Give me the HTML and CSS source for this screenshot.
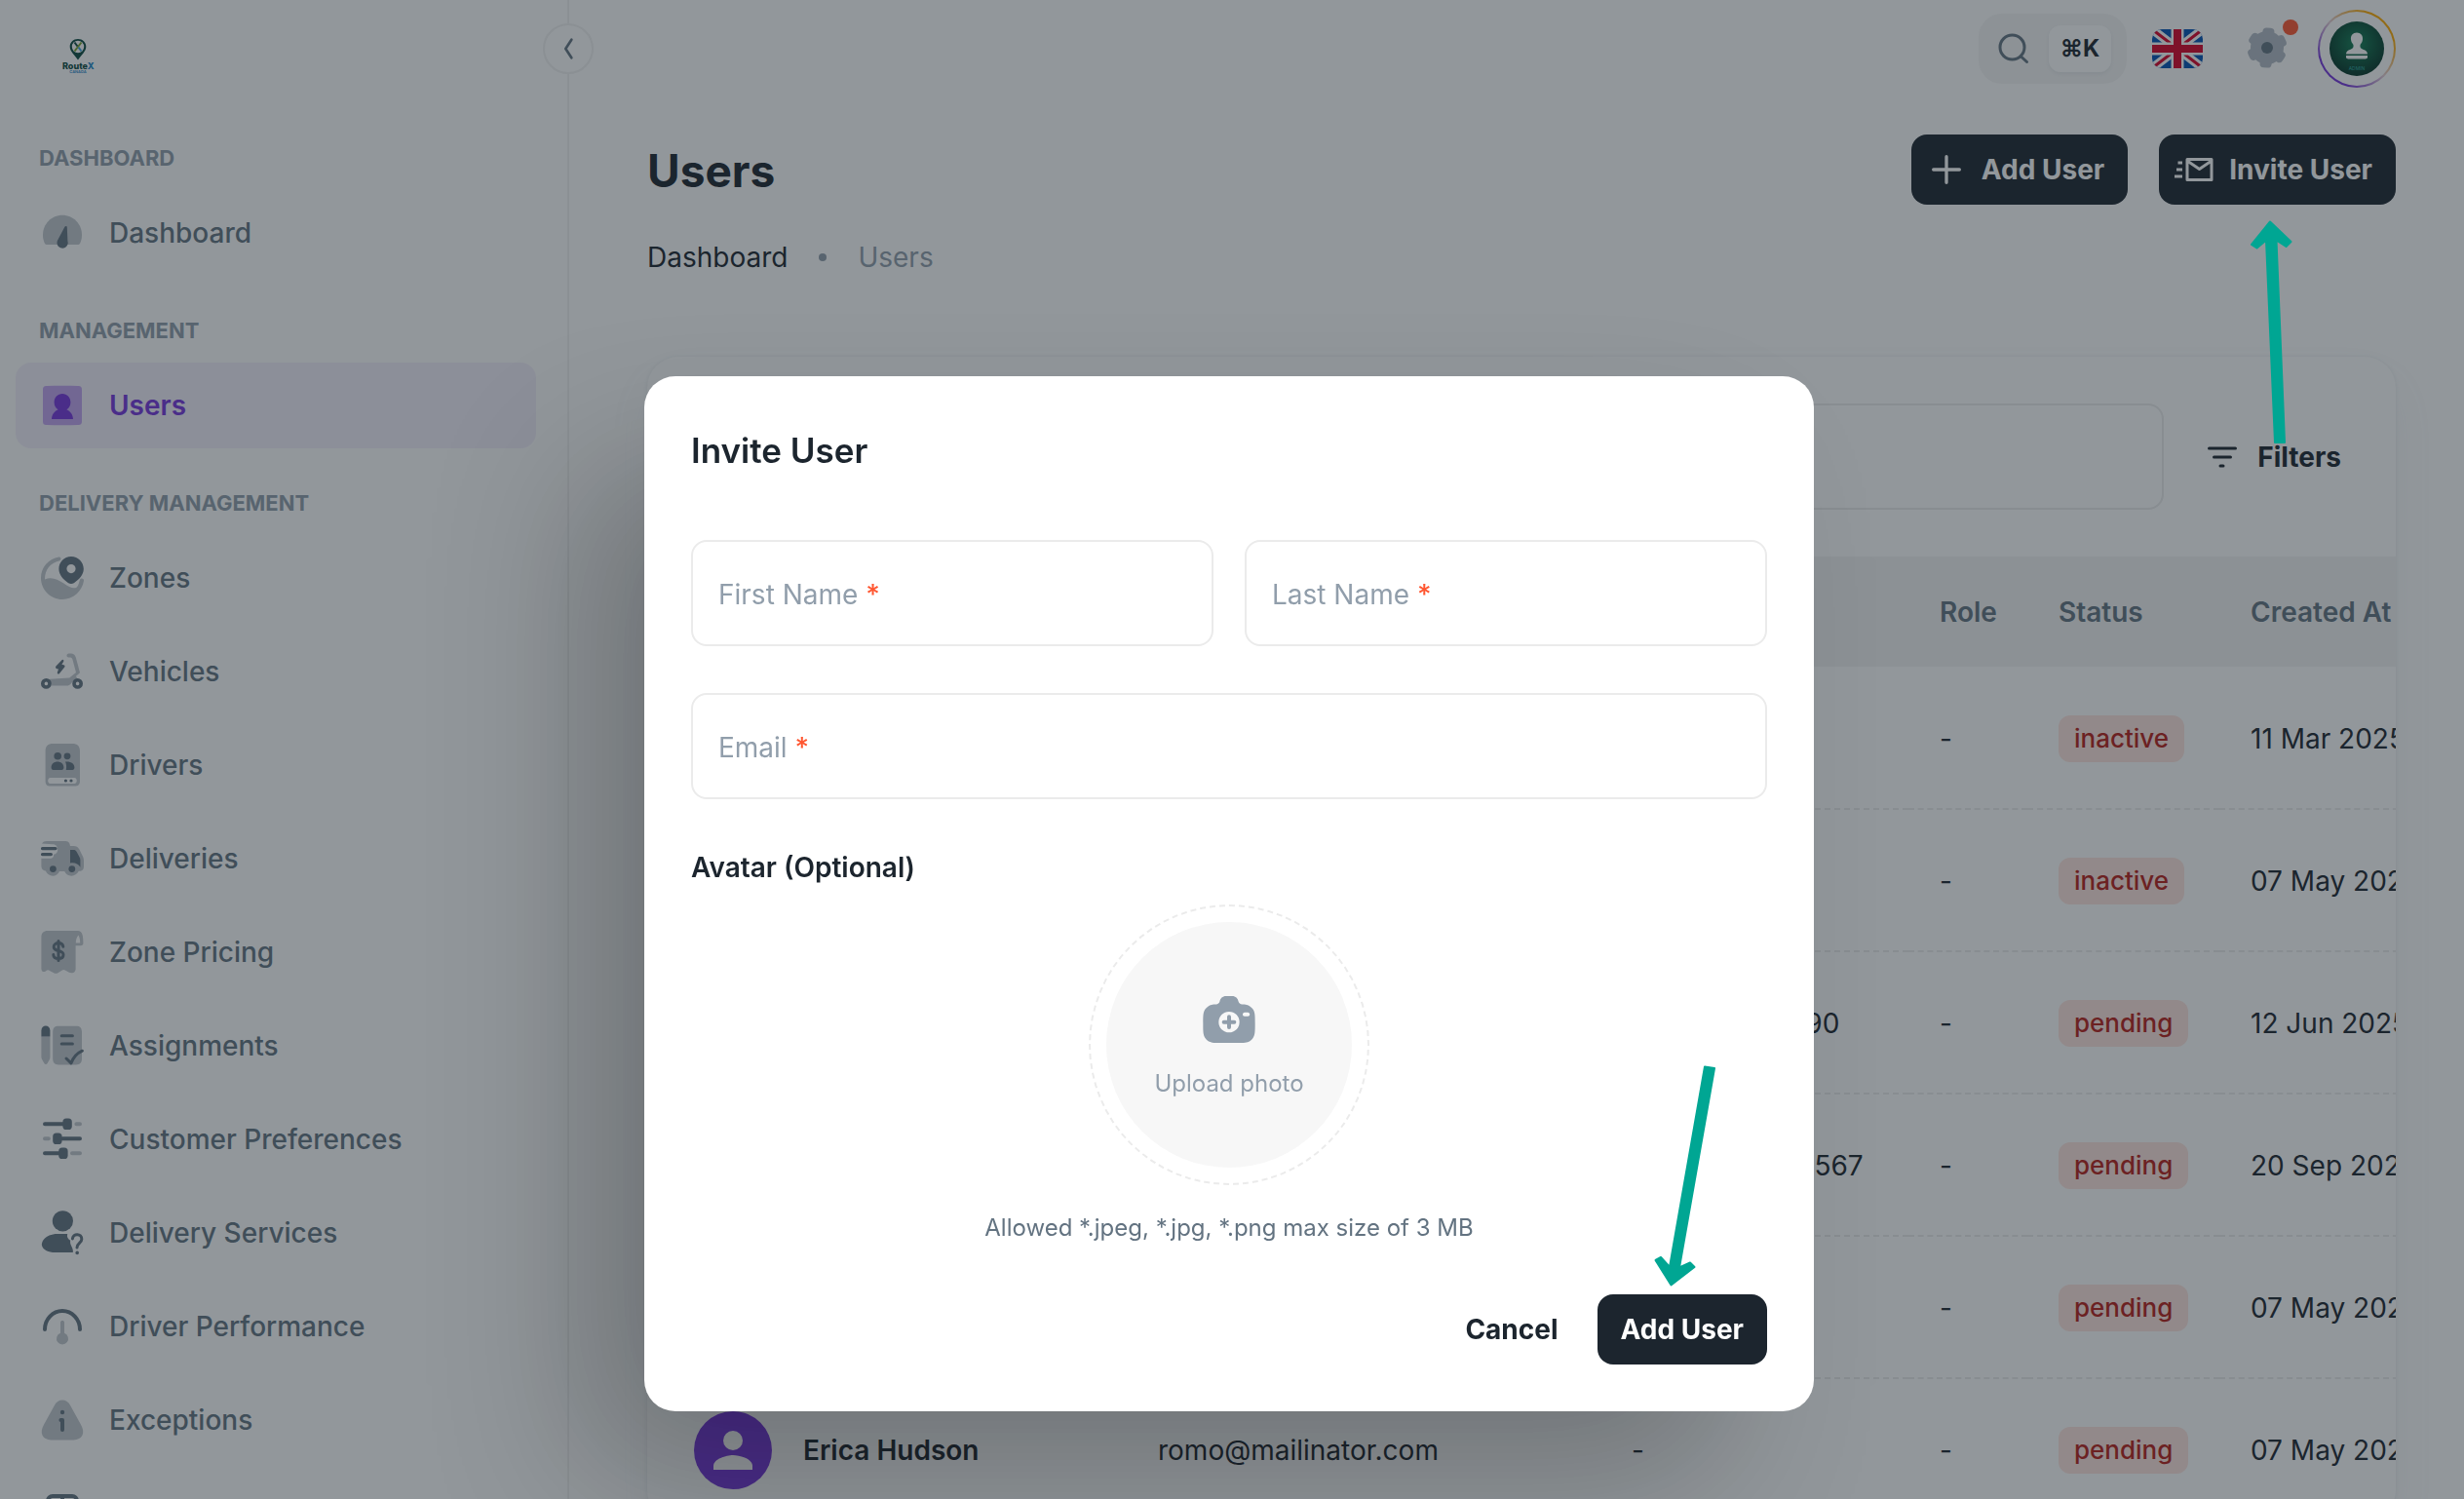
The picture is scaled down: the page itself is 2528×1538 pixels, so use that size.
FILE: index.html
```html
<!DOCTYPE html>
<html lang="en">
<head>
    <meta charset="UTF-8">
    <meta name="viewport" content="width=device-width, initial-scale=1.0">
    <title>Users</title>
    <link rel="stylesheet" href="styles.css">
</head>
<body>
    <div class="layout">
        <aside class="sidebar">
            <a class="logo" href="#" aria-label="RouteX">
                <svg viewBox="0 0 40 40" width="40" height="40">
                    <path d="M20 4c-4.700 0-8.300 3.500-8.300 8 0 5 5 8.300 8.300 13.500 3.300-5.200 8.300-8.500 8.300-13.500 0-4.500-3.600-8-8.300-8z" fill="#0b4a40"/>
                    <circle cx="20" cy="12" r="6.200" fill="#fff"/>
                    <path d="M16.500 16.500l7-9" stroke="#7aa32c" stroke-width="2"/>
                    <path d="M16.500 7.500l3 4" stroke="#0b4a40" stroke-width="2"/>
                    <path d="M20.500 12.500l3 4" stroke="#3aa0dc" stroke-width="2"/>
                    <text x="4" y="35" class="logo-name">Route<tspan fill="#1d86c8">X</tspan></text>
                    <text x="20" y="39" text-anchor="middle" class="logo-sub">CANADA</text>
                </svg>
            </a>
            <button class="toggle" aria-label="Collapse menu">
                <svg viewBox="0 0 24 24" width="32" height="32" fill="none" stroke="#637381" stroke-width="2" stroke-linecap="round" stroke-linejoin="round"><path d="M14.500 5l-4.500 7 4.500 7"/></svg>
            </button>

            <nav>
                <h6>DASHBOARD</h6>
                <ul>
                    <li><a href="#">
                        <svg viewBox="0 0 24 24"><path class="lt" d="M22 13c0 1.900-.4 3.200-.9 4.200-.3.500-.8.800-1.400.8H4.300c-.6 0-1.100-.3-1.400-.8C2.400 16.200 2 14.900 2 13 2 7.400 6.500 2.900 12 2.900S22 7.400 22 13z"/><path d="M14.400 9.200c.1-.8-.8-1-1.200-.3L9.700 15.500a2.800 2.800 0 1 0 5 .6z"/></svg>
                        Dashboard</a></li>
                </ul>

                <h6>MANAGEMENT</h6>
                <ul>
                    <li><a href="#" class="active">
                        <svg viewBox="0 0 24 24"><path class="lt" d="M2 4c0-1.500.5-2 2-2 5-.2 11-.2 16 0 1.500 0 2 .5 2 2v16c0 1.500-.5 2-2 2-5 .2-11 .2-16 0-1.500 0-2-.5-2-2z"/><path d="M12 6c-2.400 0-4.200 1.900-4.200 4.400 0 1.700.8 3 2 3.700-1.900.9-3.200 2.500-3.300 4.900h11c-.1-2.400-1.400-4-3.300-4.900 1.200-.7 2-2 2-3.700C16.200 7.900 14.400 6 12 6z"/></svg>
                        Users</a></li>
                </ul>

                <h6>DELIVERY MANAGEMENT</h6>
                <ul>
                    <li><a href="#">
                        <svg viewBox="0 0 24 24"><path class="lt" d="M10.200 1.300C5 2.100 1 6.600 1 12c0 6.100 4.900 11 11 11 5.500 0 10.200-4.200 11-9.600.1-1.200-1.500-1.600-2-.5-.4 1-.6 2.900-1.600 3.800-1.700 1.200-4-.2-6.700-2C9.400 12.600 6.500 11.200 3 12.700 3 7.800 5.800 4.400 10.300 3.300c1.400-.4 1.100-2.200-.1-2z"/><path fill-rule="evenodd" d="M16.500 1c-3.600 0-6.300 2.900-6.300 6.400 0 2.900 2.300 5.600 4.900 7.200.9.500 1.900.5 2.800 0 2.600-1.600 5-4.300 5-7.200C22.900 3.900 20.100 1 16.500 1zm0 4a2.300 2.300 0 1 1 0 4.600 2.300 2.300 0 0 1 0-4.600z"/></svg>
                        Zones</a></li>
                    <li><a href="#">
                        <svg viewBox="0 0 24 24"><path class="lt" d="M15.300 2.800c-1.400 0-1.400 2 0 2h.8c.6 0 .9.500 1.100 1l1.800 6.700-3.400 2.700-12 .8c1.900.2 2.700 1.600 2.800 3.200h8.400c2-.1 2.200-3.200 5-3.200l-.8-1.600 2-1.800L18.900 4.700c-.4-1.200-1.300-1.900-2.500-1.900z"/><path fill-rule="evenodd" d="M3.700 15.500a2.700 2.700 0 1 1 0 5.400 2.700 2.700 0 0 1 0-5.400zm0 1.800a.9.900 0 1 0 0 1.800.9.900 0 0 0 0-1.800zM19.800 15.500a2.700 2.700 0 1 1 0 5.400 2.700 2.700 0 0 1 0-5.400zm0 1.800a.9.900 0 1 0 0 1.800.9.900 0 0 0 0-1.800zM11.600 6.200L8.700 9.300c-.4.600-.1 1.200.5 1.300l.8.200-.6 1.700c-.1.700.6 1 1.100.5l2.600-3.200c.4-.6.100-1.100-.5-1.200l-.9-.2.900-1.500c.4-.9-.5-1.400-1-.7z"/></svg>
                        Vehicles</a></li>
                    <li><a href="#">
                        <svg viewBox="0 0 24 24"><path class="lt" fill-rule="evenodd" d="M3.300 5c0-2.800 1.200-4 4-4H17c2.800 0 4 1.200 4 4v15c0 2-.8 2.800-2.800 2.800H6c-2 0-2.700-.8-2.700-2.800zM5.800 18.500c-1.600 0-1.600 3 0 3h12.400c1.600 0 1.600-3 0-3z"/><circle cx="9.600" cy="7.400" r="1.900"/><circle cx="14.500" cy="7.400" r="1.700"/><path d="M6.300 13.300c0-4 6.400-4 6.400 0 0 .7-.4 1.200-1 1.200H7.300c-.6 0-1-.5-1-1.200zM13.500 10.300c2.700-.3 4.700.8 4.700 3 0 .7-.4 1.200-1 1.200h-3.300c.3-1.600.2-2.900-.4-4.200z"/><circle cx="13.700" cy="20" r=".8"/><circle cx="16.500" cy="20" r=".8"/></svg>
                        Drivers</a></li>
                    <li><a href="#">
                        <svg viewBox="0 0 24 24"><path class="lt" d="M1.500 4.300C2 3.400 2.800 3 4 3h9c2 0 2.700.6 3 2.500h1.700c1.500 0 2.300.5 3 1.800l1.600 3.200c.5.900.7 1.700.7 2.800v2.200c0 2.200-.6 2.900-2.600 2.900-1.500 3.200-6 3.200-7.300.1h-2.600c-1.400 3.200-5.700 3.100-7.100-.2-1.800-.3-2.200-1.300-2.200-3v-3.400h4.300c1.700 0 2.200-.9 2-2 1.200-.2 2.100-1.100 2.100-2.400 0-1.700-.9-2.900-2.500-2.900z"/><path d="M1.800 6h6.600c1.200 0 1.200 1.600 0 1.600H1.800c-1.100 0-1.100-1.600 0-1.600zM1.800 9h4.300c1.200 0 1.200 1.600 0 1.600H1.800C.7 10.600.7 9 1.800 9zM16 7.500h1.600c.9 0 1.400.3 1.800 1.100l1.400 2.700c.3.500.4 1 .4 1.600v3.500c-1-1.800-2.800-2.600-5.200-2.200z"/><circle cx="7.200" cy="17.300" r="1.700"/><circle cx="16.900" cy="17.300" r="1.700"/></svg>
                        Deliveries</a></li>
                    <li><a href="#">
                        <svg viewBox="0 0 24 24"><path class="lt" fill-rule="evenodd" d="M20 1H4.500C2.300 1 1.200 2.100 1.200 4.300v16.200c0 1.400 1.200 2 2.200 1.200.8-.7 1.500-.7 2.300-.1l1.900 1c.8.500 1.500.4 2.300-.1l1.800-1.100c.7-.5 1.300-.4 2 0l1.800 1c1.500.5 3.300.3 3.300-2V8.600h2.600c.9 0 1.300-.4 1.300-1.300C22.700 3.500 22.200 1 20 1zm.2 2.200c.6 1 .9 2.300.9 4h-2.200c0-1.600.4-2.900 1.300-4z"/><path d="M12.400 9.100c-.2-1.200-1.100-1.800-2.400-1.800s-2.400.7-2.400 1.900c0 2.900 4.900 1.200 4.900 4.100 0 1.300-1.100 2-2.500 2s-2.500-.7-2.600-2M10 6.200v10" class="st"/></svg>
                        Zone Pricing</a></li>
                    <li><a href="#">
                        <svg viewBox="0 0 24 24"><path class="lt" d="M1.200 7.200h4.500v10.600c0 .6-.1 1-.4 1.500l-1 1.700c-.4.700-1.200.7-1.600 0l-1-1.700c-.3-.5-.5-.9-.5-1.500zM7.100 5c0-2.200.9-3.100 3.100-3.100h8.700C21.100 1.900 22 2.800 22 5v13.500c0 2.200-.9 3.200-3.100 3.200h-8.700c-2.200 0-3.100-1-3.100-3.200z"/><path d="M1.200 4.200c0-3.200 4.500-3.200 4.500 0v3H1.200z"/><path class="st" d="M11.600 6.900h5.600M11.600 11h5.600M14 18.500l2.500 2.400c1-2.800 3.300-5.200 5.700-6.300"/></svg>
                        Assignments</a></li>
                    <li><a href="#">
                        <svg viewBox="0 0 24 24"><path class="st thick" d="M3 4.100h10M12 11.600h9M3 19.100h8"/><path class="st thick lt" d="M19.200 4.100h1.800M3 11.600h1.900M17 19.100h4"/><rect x="12.200" y="1.200" width="4.700" height="5.800" rx="1.800"/><rect x="7.100" y="8.700" width="4.700" height="5.800" rx="1.800"/><rect x="10.100" y="16.200" width="4.700" height="5.800" rx="1.800"/></svg>
                        Customer Preferences</a></li>
                    <li><a href="#">
                        <svg viewBox="0 0 24 24"><circle cx="12.200" cy="5.900" r="5.300"/><path d="M1.400 18c.3-3.500 4-5.500 8-5.500h5.200c-.4 1.500.2 2.700 1.500 3.400-.5 2.400 1.700 3.500 1.300 6.100H7c-3.300-.4-5.300-1.800-5.600-4z"/><path class="st" d="M17.200 15c.2-3 4.800-2.800 4.700.2 0 2-2.400 2-2.400 4.300"/><circle cx="19.600" cy="22.200" r=".9"/></svg>
                        Delivery Services</a></li>
                    <li><a href="#">
                        <svg viewBox="0 0 24 24"><path class="st thick" d="M3 13.500a9 9.500 0 0 1 18 0"/><path class="lt" d="M11 10c0-1.300 2-1.300 2 0v5.400a3 3 0 1 1-2 0z"/></svg>
                        Driver Performance</a></li>
                    <li><a href="#">
                        <svg viewBox="0 0 24 24"><path class="lt" d="M7.800 4.700c1.800-3.900 6.600-3.900 8.400 0l5.300 9.700c2.500 4.300.6 7.800-3.700 7.800H6.200c-4.300 0-6.200-3.500-3.700-7.800z"/><circle cx="12" cy="8" r="1.100"/><path class="st thick" d="M11.200 12h.8v5"/></svg>
                        Exceptions</a></li>
                    <li><a href="#" aria-label="Reports">
                        <svg viewBox="0 0 24 24"><path class="st thick" d="M7 3h10a2.500 2.500 0 0 1 2.500 2.500v13A2.500 2.500 0 0 1 17 21H7a2.500 2.500 0 0 1-2.500-2.500v-13A2.500 2.500 0 0 1 7 3zM12 3v6"/></svg>
                    </a></li>
                </ul>
            </nav>
        </aside>

        <main>
            <header class="topbar">
                <button class="search" aria-label="Search">
                    <svg viewBox="0 0 40 40" width="40" height="40" fill="none" stroke="#637381" stroke-width="3" stroke-linecap="round"><circle cx="18.500" cy="18.500" r="12.500"/><path d="M27.500 28l6 5.500"/></svg>
                    <kbd>⌘K</kbd>
                </button>
                <button class="flag" aria-label="Language">
                    <svg viewBox="0 0 52 40" width="52" height="40">
                        <rect width="52" height="40" fill="#0052b4"/>
                        <path d="M0 0l52 40M52 0L0 40" stroke="#fff" stroke-width="9"/>
                        <path d="M0 0l52 40M52 0L0 40" stroke="#d80027" stroke-width="3"/>
                        <path d="M26 0v40M0 20h52" stroke="#fff" stroke-width="13"/>
                        <path d="M26 0v40M0 20h52" stroke="#d80027" stroke-width="8"/>
                    </svg>
                </button>
                <button class="gear" aria-label="Settings">
                    <svg viewBox="0 0 48 48" width="48" height="48" fill="#b2bbc5">
                        <circle cx="24" cy="23" r="17"/>
                        <rect x="18" y="2.500" width="12" height="41" rx="4" transform="rotate(5 24 23)"/>
                        <rect x="18" y="2.500" width="12" height="41" rx="4" transform="rotate(65 24 23)"/>
                        <rect x="18" y="2.500" width="12" height="41" rx="4" transform="rotate(125 24 23)"/>
                        <circle cx="24" cy="23" r="6" fill="#637381"/>
                    </svg>
                    <span class="dot"></span>
                </button>
                <button class="account" aria-label="Account">
                    <svg viewBox="0 0 56 56" width="56" height="56">
                        <defs><radialGradient id="av" cx=".5" cy=".4" r=".6"><stop offset="0" stop-color="#128056"/><stop offset="1" stop-color="#053528"/></radialGradient></defs>
                        <circle cx="28" cy="28" r="28" fill="url(#av)"/>
                        <path d="M28 11.500c-4 0-6.500 3-6 7 .2 2.500 1.500 4 2.500 5.500.5 3-1 4-3 4.700-3 .8-4.300 2.300-4.500 4.800h22c-.2-2.500-1.500-4-4.500-4.800-2-.7-3.500-1.700-3-4.700 1-1.500 2.300-3 2.500-5.500.5-4-2-7-6-7zM17 35h22v2.500l-2 1H19l-2-1z" fill="#fff"/>
                        <text x="28" y="50" text-anchor="middle" class="avatar-text">ADMIN</text>
                    </svg>
                </button>
            </header>

            <div class="page-head">
                <div>
                    <h1>Users</h1>
                    <div class="breadcrumb">
                        <a href="#">Dashboard</a>
                        <span class="sep"></span>
                        <span>Users</span>
                    </div>
                </div>
                <div class="head-actions">
                    <button class="btn">
                        <svg viewBox="0 0 24 24" width="40" height="40" fill="none" stroke="currentColor" stroke-width="2" stroke-linecap="round"><path d="M12 4v16M4 12h16"/></svg>
                        Add User
                    </button>
                    <button class="btn">
                        <svg viewBox="0 0 40 40" width="40" height="40" fill="none" stroke="currentColor" stroke-width="3" stroke-linejoin="round"><path d="M13 9.500h25v21H13zM13 11l12.500 8.500L38 11"/><path d="M3.500 13h4.500M2 20h6M0 27h8"/></svg>
                        Invite User
                    </button>
                </div>
            </div>

            <section class="card">
                <div class="toolbar">
                    <input type="text" aria-label="Search users">
                    <button class="filters">
                        <svg viewBox="0 0 40 40" width="40" height="40" fill="none" stroke="currentColor" stroke-width="3" stroke-linecap="round"><path d="M6.500 11h27M11.500 20h17M18 29h3"/></svg>
                        Filters
                    </button>
                </div>
                <table>
                    <colgroup>
                        <col class="c-name"><col class="c-email"><col class="c-phone"><col class="c-role"><col class="c-status"><col class="c-date">
                    </colgroup>
                    <thead>
                        <tr><th></th><th></th><th></th><th>Role</th><th>Status</th><th>Created At</th></tr>
                    </thead>
                    <tbody>
                        <tr><td></td><td></td><td></td><td>-</td><td><span class="chip">inactive</span></td><td>11 Mar 2025</td></tr>
                        <tr><td></td><td></td><td></td><td>-</td><td><span class="chip">inactive</span></td><td>07 May 2025</td></tr>
                        <tr><td></td><td></td><td>+112345678990</td><td>-</td><td><span class="chip">pending</span></td><td>12 Jun 2025</td></tr>
                        <tr><td></td><td></td><td>+1 555501234567</td><td>-</td><td><span class="chip">pending</span></td><td>20 Sep 2025</td></tr>
                        <tr><td></td><td></td><td></td><td>-</td><td><span class="chip">pending</span></td><td>07 May 2025</td></tr>
                        <tr>
                            <td>
                                <div class="user">
                                    <svg viewBox="0 0 80 80" width="80" height="80"><circle cx="40" cy="40" r="40" fill="#7635dc"/><circle cx="40" cy="30" r="10" fill="#fff"/><path d="M20 60v-4c0-7 13-11 20-11s20 4 20 11v4z" fill="#fff"/></svg>
                                    Erica Hudson
                                </div>
                            </td>
                            <td>romo@mailinator.com</td><td>-</td><td>-</td><td><span class="chip">pending</span></td><td>07 May 2025</td>
                        </tr>
                    </tbody>
                </table>
            </section>
        </main>
    </div>

    <div class="overlay">
        <form class="modal" role="dialog" aria-labelledby="modal-title">
            <h2 id="modal-title">Invite User</h2>
            <div class="fields">
                <div class="field">
                    <input type="text" id="first">
                    <label for="first">First Name <i>*</i></label>
                </div>
                <div class="field">
                    <input type="text" id="last">
                    <label for="last">Last Name <i>*</i></label>
                </div>
                <div class="field wide">
                    <input type="email" id="email">
                    <label for="email">Email <i>*</i></label>
                </div>
            </div>
            <h3>Avatar (Optional)</h3>
            <button type="button" class="upload">
                <span class="upload-inner">
                    <svg viewBox="0 0 24 24" width="64" height="64" fill="#919eab"><path fill-rule="evenodd" d="M9.800 21h4.400c3.100 0 4.600 0 5.800-.7.500-.3.900-.7 1.200-1.200.8-1.100.8-2.600.8-5.500s0-4.400-.8-5.500c-.3-.5-.7-.9-1.200-1.200-.7-.5-1.600-.7-3-.7-.7 0-1.200-.5-1.400-1.100C15.400 3.900 14.500 3 13.200 3h-2.400c-1.300 0-2.200.9-2.400 2.100-.2.600-.7 1.100-1.400 1.100-1.400 0-2.300.2-3 .7-.5.300-.9.700-1.200 1.200C2 9.200 2 10.700 2 13.600s0 4.400.8 5.500c.3.500.7.900 1.200 1.200 1.200.7 2.700.7 5.800.7zM12 9a4 4 0 1 1 0 8 4 4 0 0 1 0-8zm6 .3h1.200c1 0 1 1.500 0 1.500H18c-1 0-1-1.500 0-1.500z"/><path d="M12 11v4M10 13h4" stroke="#919eab" stroke-width="1.500" stroke-linecap="round"/></svg>
                    Upload photo
                </span>
            </button>
            <p class="hint">Allowed *.jpeg, *.jpg, *.png max size of 3 MB</p>
            <div class="actions">
                <button type="button" class="btn text">Cancel</button>
                <button type="submit" class="btn">Add User</button>
            </div>
        </form>
    </div>

    <!-- pointers to the two buttons -->
    <svg class="arrow arrow-invite" viewBox="0 0 48 232" width="48" height="232"><path d="M23 1.500L4 25l5.500 3.500 9.500-8 9 207.500h10L29.500 20.500l10 6.500 5-5z"/></svg>
    <svg class="arrow arrow-add" viewBox="0 0 66 230" width="66" height="230"><path d="M18.500 226.500L2.500 201l5.500-3 9 10L53 2.500l10 1.500-36 204.500 11-5 4.500 4.500z"/></svg>
</body>
</html>
```
FILE: styles.css
```css
*{
    margin: 0;
    padding: 0;
    box-sizing: border-box;
}
body{
    font-family: Inter, "Liberation Sans", sans-serif;
    font-size: 28px;
    line-height: 44px;
    color: #1c252e;
    background: #fff;
    overflow: hidden;
}
a{
    color: inherit;
    text-decoration: none;
}
ul{
    list-style: none;
}
button{
    font: inherit;
    color: inherit;
    background: none;
    border: 0;
    cursor: pointer;
}
svg{
    display: block;
    flex: none;
}
.layout{
    display: flex;
    height: 100vh;
    overflow: hidden;
}

/* sidebar */
.sidebar{
    position: relative;
    flex: none;
    width: 584px;
    padding: 36px 32px 0 16px;
    border-right: 2px solid #f1f1f1;
}
.logo{
    display: block;
    width: 40px;
    margin: 0 0 38px 44px;
}
.logo-name{
    font-size: 9px;
    font-weight: 800;
    fill: #0b4a40;
}
.logo-sub{
    font-size: 4px;
    font-weight: 600;
    fill: #1d86c8;
}
.toggle{
    position: absolute;
    top: 24px;
    right: -27px;
    width: 52px;
    height: 52px;
    border: 2px solid #f1f1f1;
    border-radius: 50%;
    background: #fff;
    display: flex;
    align-items: center;
    justify-content: center;
}
nav h6{
    padding: 32px 24px 16px;
    font-size: 22px;
    line-height: 33px;
    font-weight: 700;
    color: #919eab;
}
nav ul{
    display: flex;
    flex-direction: column;
    gap: 8px;
    margin-bottom: 8px;
}
nav a{
    display: flex;
    align-items: center;
    gap: 24px;
    height: 88px;
    padding: 0 24px;
    border-radius: 16px;
    font-weight: 500;
    color: #637381;
}
nav a svg{
    width: 48px;
    height: 48px;
    fill: currentColor;
}
nav a.active{
    color: #7635dc;
    font-weight: 600;
    background: rgba(118,53,220,.08);
}
.lt{
    opacity: .4;
}
.st{
    fill: none;
    stroke: currentColor;
    stroke-width: 1.5;
    stroke-linecap: round;
    stroke-linejoin: round;
}
.thick{
    stroke-width: 2;
}

/* main */
main{
    flex: 1;
    min-width: 0;
    padding: 10px 70px 0 80px;
}
.topbar{
    display: flex;
    align-items: center;
    justify-content: flex-end;
    height: 80px;
}
.search{
    display: flex;
    align-items: center;
    gap: 16px;
    height: 72px;
    padding: 0 16px;
    border-radius: 24px;
    background: #f6f6f6;
}
.search kbd{
    width: 64px;
    height: 48px;
    line-height: 48px;
    border-radius: 12px;
    background: #fff;
    font-family: inherit;
    font-size: 24px;
    font-weight: 700;
    text-align: center;
    box-shadow: 0 2px 4px rgba(145,158,171,.16);
}
.flag{
    margin-left: 26px;
    border-radius: 10px;
    overflow: hidden;
}
.gear{
    position: relative;
    margin: 0 28px 0 42px;
}
.dot{
    position: absolute;
    top: -8px;
    right: -8px;
    width: 16px;
    height: 16px;
    border-radius: 50%;
    background: #ff5630;
}
.gear .dot{
    top: -6px;
}
.account{
    width: 80px;
    height: 80px;
    padding: 10px;
    border: 2px solid transparent;
    border-radius: 50%;
    background: linear-gradient(#fff,#fff) padding-box, linear-gradient(45deg,#7635dc 20%,#e6cfd6 50%,#ffab00 80%) border-box;
}
.avatar-text{
    font-size: 5px;
    fill: #2aa5a0;
}
.page-head{
    display: flex;
    justify-content: space-between;
    align-items: flex-start;
    margin: 48px 0 80px;
}
h1{
    font-size: 46px;
    line-height: 74px;
    font-weight: 700;
}
.breadcrumb{
    display: flex;
    align-items: center;
    gap: 32px;
    margin-top: 30px;
    color: #919eab;
}
.breadcrumb a{
    color: #1c252e;
}
.sep{
    width: 8px;
    height: 8px;
    border-radius: 50%;
    background: #919eab;
}
.head-actions{
    display: flex;
    gap: 32px;
}
.btn{
    display: flex;
    align-items: center;
    gap: 16px;
    height: 72px;
    padding: 0 24px;
    border-radius: 16px;
    font-weight: 700;
    color: #fff;
    background: #1c252e;
}
.head-actions .btn{
    padding-left: 16px;
}
.btn.text{
    color: #1c252e;
    background: none;
}
.card{
    border-radius: 32px;
    overflow: hidden;
    box-shadow: 0 0 4px rgba(145,158,171,.2), 0 24px 48px -8px rgba(145,158,171,.12);
}
.toolbar{
    display: flex;
    align-items: center;
    gap: 24px;
    padding: 48px 40px 48px 48px;
}
.toolbar input, .field input{
    flex: 1;
    height: 109px;
    padding: 0 28px;
    border: 2px solid #ebebeb;
    border-radius: 16px;
    background: none;
    font: inherit;
    outline: none;
}
.filters{
    display: flex;
    align-items: center;
    gap: 16px;
    padding: 14px 16px;
    font-weight: 700;
}
table{
    width: 2044px;
    table-layout: fixed;
    border-collapse: collapse;
}
.c-name{ width: 492px; }
.c-email{ width: 486px; }
.c-phone{ width: 316px; }
.c-role{ width: 122px; }
.c-status{ width: 197px; }
th{
    height: 113px;
    padding: 0 32px;
    text-align: left;
    font-weight: 600;
    color: #637381;
    background: #f4f4f4;
    white-space: nowrap;
}
td{
    height: 146px;
    padding: 2px 32px 0;
    border-bottom: 2px dashed #ebebeb;
    white-space: nowrap;
}
td:first-child{
    padding-left: 48px;
}
.user{
    display: flex;
    align-items: center;
    gap: 32px;
    font-weight: 600;
}
.chip{
    display: inline-block;
    height: 48px;
    line-height: 48px;
    padding: 0 16px;
    border-radius: 12px;
    font-size: 26px;
    font-weight: 500;
    color: #b71d18;
    background: rgba(255,86,48,.16);
}

/* modal */
.overlay{
    position: fixed;
    inset: 0;
    display: flex;
    align-items: flex-start;
    justify-content: center;
    padding: 386px 6px 0 0;
    background: rgba(28,37,46,.48);
}
.modal{
    width: 1200px;
    padding: 48px;
    border-radius: 32px;
    background: #fff;
    box-shadow: -80px 80px 160px -16px rgba(0,0,0,.24);
}
h2{
    font-size: 35px;
    line-height: 56px;
    font-weight: 600;
    margin-bottom: 64px;
}
.fields{
    display: grid;
    grid-template-columns: 1fr 1fr;
    gap: 48px 32px;
}
.field{
    display: grid;
    align-items: center;
}
.wide{
    grid-column: span 2;
}
.field input, .field label{
    grid-area: 1 / 1;
    min-width: 0;
}
.field label{
    padding: 2px 0 0 28px;
    color: #919eab;
    pointer-events: none;
}
.field i{
    font-style: normal;
    font-weight: 500;
    color: #ff5630;
}
h3{
    margin: 48px 0 16px;
    font-size: 28px;
    line-height: 44px;
    font-weight: 600;
}
.upload{
    display: block;
    width: 288px;
    height: 288px;
    margin: 0 auto;
    padding: 16px;
    border: 2px dashed #ebebeb;
    border-radius: 50%;
}
.upload-inner{
    display: flex;
    flex-direction: column;
    align-items: center;
    justify-content: center;
    gap: 16px;
    height: 100%;
    border-radius: 50%;
    background: #f7f7f7;
    font-size: 24px;
    line-height: 36px;
    color: #919eab;
}
.hint{
    margin: 24px 0 48px;
    font-size: 24px;
    line-height: 40px;
    text-align: center;
    color: #637381;
}
.actions{
    display: flex;
    justify-content: flex-end;
    gap: 16px;
}

/* arrows drawn over the page */
.arrow{
    position: absolute;
    fill: #00a693;
    stroke: #00a693;
    stroke-width: 2;
    stroke-linejoin: round;
}
.arrow-invite{
    top: 226px;
    left: 2306px;
}
.arrow-add{
    top: 1092px;
    left: 1696px;
}
```
